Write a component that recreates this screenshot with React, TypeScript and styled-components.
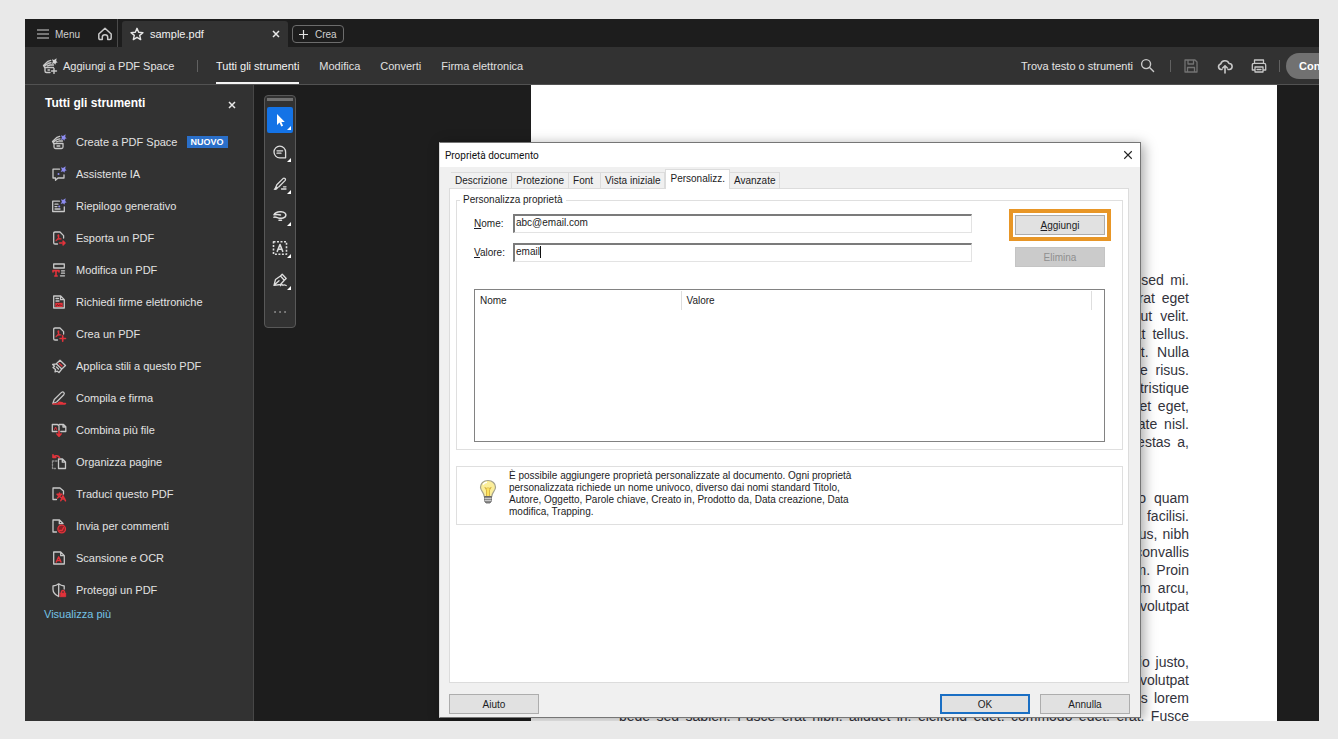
import React from "react";
import styled, { createGlobalStyle, css } from "styled-components";

const GlobalStyle = createGlobalStyle`
  *, *::before, *::after { box-sizing: border-box; }
  body {
    margin: 0;
    background: #e9e9e9;
    font-family: "Liberation Sans", Arial, sans-serif;
    font-size: 11px;
    color: #e4e4e4;
  }
  button, input { font: inherit; color: inherit; margin: 0; }
  button { background: none; border: 0; padding: 0; cursor: pointer; }
  a { color: inherit; text-decoration: none; }
  svg { display: block; flex: none; }
`;

/* ---------- window frame ---------- */

const Screen = styled.div`
  height: 100vh;
  min-width: 1160px;
  padding: 19px 19px 18px 25px;
`;

const Window = styled.div`
  position: relative;
  display: flex;
  flex-direction: column;
  height: 100%;
  overflow: hidden;
  background: #1d1d1d;
`;

const TitleBar = styled.header`
  display: flex;
  align-items: stretch;
  height: 28px;
  flex: none;
`;

const MenuButton = styled.button`
  display: flex;
  align-items: center;
  gap: 6px;
  width: 71px;
  padding-left: 12px;
  padding-top: 2px;
  font-size: 10px;
  color: #cfcfcf;
`;

const HomeButton = styled.button`
  display: flex;
  align-items: center;
  width: 22px;
  padding: 2px 0 0 1px;
  border-right: 1px solid #4a4a4a;
`;

const FileTab = styled.div`
  display: flex;
  align-items: center;
  gap: 6px;
  width: 166px;
  margin: 2px 4px 0;
  padding: 0 8px;
  background: #323232;
  border-radius: 3px 3px 0 0;
`;

const FileName = styled.span`
  flex: 1;
  color: #f0f0f0;
`;

const CreateButton = styled.button`
  display: flex;
  align-items: center;
  align-self: center;
  gap: 7px;
  height: 18px;
  margin-top: 2px;
  padding: 0 6px;
  border: 1px solid #6c6c6c;
  border-radius: 4px;
  font-size: 10px;
  color: #d0d0d0;
`;

const ToolBar = styled.nav`
  display: flex;
  align-items: stretch;
  height: 38px;
  flex: none;
  background: #323232;
  border-bottom: 1px solid #525252;
`;

const SpaceGroup = styled.div`
  display: flex;
  align-items: center;
  justify-content: space-between;
  width: 191px;
  padding: 0 18px 0 17px;
`;

const SpaceButton = styled.button`
  display: flex;
  align-items: center;
  gap: 5px;
`;

const NavLink = styled.a<{ $active?: boolean }>`
  display: flex;
  align-items: center;
  margin-right: 20px;
  border-bottom: 2px solid ${(p) => (p.$active ? "#f4f4f4" : "transparent")};
  padding-top: 2px;
  color: ${(p) => (p.$active ? "#f4f4f4" : "#e0e0e0")};
`;

const Divider = styled.span`
  align-self: center;
  width: 1px;
  height: 12px;
  background: #616161;
`;

const RightTools = styled.div`
  display: flex;
  align-items: center;
  margin-left: auto;
`;

const SearchButton = styled.button`
  display: flex;
  align-items: center;
  gap: 7px;
  margin-right: 15px;
`;

const IconRow = styled.div`
  display: flex;
  gap: 18px;
  padding: 0 12px;
`;

const ShareClip = styled.div`
  width: 33px;
  margin-left: 6px;
  overflow: hidden;
`;

const ShareButton = styled.button`
  height: 26px;
  padding: 0 13px;
  border-radius: 13px;
  background: #717171;
  color: #fff;
  font-weight: bold;
`;

/* ---------- sidebar ---------- */

const Body = styled.div`
  display: flex;
  align-items: stretch;
  flex: 1;
  min-height: 0;
`;

const Sidebar = styled.aside`
  width: 229px;
  flex: none;
  padding-top: 9px;
  background: #323232;
  border-right: 1px solid #474747;
`;

const SidebarHead = styled.div`
  display: flex;
  align-items: center;
  justify-content: space-between;
  height: 18px;
  padding: 0 17px 0 20px;
  margin-bottom: 14px;
`;

const SidebarTitle = styled.h2`
  margin: 0;
  font-size: 12px;
  color: #fff;
`;

const CloseButton = styled.button`
  margin-top: 4px;
`;

const ToolList = styled.ul`
  margin: 0;
  padding: 0;
  list-style: none;
`;

const ToolLink = styled.a`
  display: flex;
  align-items: center;
  gap: 9px;
  height: 32px;
  padding-left: 26px;
  color: #e2e2e2;
`;

const NewBadge = styled.span`
  padding: 0 4px;
  line-height: 12px;
  background: #2a6fc9;
  color: #fff;
  font-size: 9px;
  font-weight: bold;
`;

const MoreLink = styled.a`
  display: block;
  padding-left: 19px;
  line-height: 16px;
  color: #74c2e6;
`;

/* ---------- canvas ---------- */

const Toolbox = styled.div`
  display: flex;
  flex-direction: column;
  align-items: center;
  align-self: flex-start;
  gap: 6px;
  width: 32px;
  height: 233px;
  flex: none;
  margin: 10px 235px 0 10px;
  padding-top: 2px;
  border: 1px solid #585858;
  border-radius: 4px;
  background: #323232;
`;

const Grip = styled.div`
  width: 26px;
  height: 3px;
  background: #717171;
`;

const ToolboxButton = styled.button<{ $active?: boolean }>`
  display: flex;
  align-items: center;
  justify-content: center;
  position: relative;
  width: 26px;
  height: 26px;
  flex: none;
  border-radius: 2px;
  background: ${(p) => (p.$active ? "#1473e6" : "transparent")};
`;

const Corner = styled.svg`
  position: absolute;
  right: 2px;
  bottom: 3px;
`;

const Page = styled.main`
  flex: 1;
  min-width: 0;
  margin-right: 42px;
  padding: 186px 88px 0;
  overflow: hidden;
  background: #fff;
  color: #33333c;
  font-size: 14px;
  line-height: 18px;
`;

const Paragraph = styled.p`
  margin: 0 0 38px;
`;

const Line = styled.span`
  display: block;
  white-space: nowrap;
  text-align: justify;
  text-align-last: justify;
`;

/* ---------- dialog ---------- */

const Dialog = styled.section`
  position: absolute;
  top: 123px;
  left: 414px;
  width: 702px;
  display: flex;
  flex-direction: column;
  border: 1px solid #767676;
  border-left-color: #dcdcdc;
  background: #f0f0f0;
  box-shadow: 3px 2px 12px rgba(0, 0, 0, 0.35);
  color: #1c1c24;
  font-size: 10px;
`;

const DialogHead = styled.div`
  display: flex;
  align-items: center;
  justify-content: space-between;
  height: 24px;
  padding: 0 7px 0 5px;
  background: #fff;
`;

const DialogTitle = styled.h1`
  margin: 0;
  font: 400 10px Roboto, sans-serif;
  color: #111;
`;

const TabStrip = styled.div`
  display: flex;
  align-items: flex-end;
  height: 21px;
  padding-left: 11px;
`;

const Tab = styled.button<{ $active?: boolean; $wide?: boolean }>`
  position: relative;
  height: ${(p) => (p.$active ? 20 : 16)}px;
  margin-bottom: ${(p) => (p.$active ? -1 : 0)}px;
  padding: 0 4px ${(p) => (p.$active ? 3 : 0)}px;
  border: 1px solid #dcdcdc;
  border-bottom: 0;
  border-left-width: ${(p) => (p.$active ? 1 : 0)}px;
  background: ${(p) => (p.$active ? "#fff" : "#f0f0f0")};
  ${(p) =>
    p.$wide &&
    css`
      padding-right: 7px;
    `}
`;

const Pane = styled.div`
  height: 495px;
  margin: 0 11px 0 9px;
  padding: 5px 5px 0 6px;
  border: 1px solid #dcdcdc;
  background: #fff;
`;

const Group = styled.fieldset`
  margin: 0;
  padding: 0 17px 7px;
  border: 1px solid #dfdfdf;
`;

const Legend = styled.legend`
  margin-left: -14px;
  padding: 0 3px;
  line-height: 12px;
`;

const FormArea = styled.div`
  display: flex;
  justify-content: space-between;
  height: 83px;
`;

const Fields = styled.div`
  display: flex;
  flex-direction: column;
  gap: 10px;
  padding-top: 8px;
`;

const Field = styled.div`
  position: relative;
  display: flex;
  align-items: center;
  height: 19px;
`;

const Label = styled.label`
  width: 39px;
`;

const TextInput = styled.input`
  width: 459px;
  height: 19px;
  padding: 0 0 3px 1px;
  border: 1px solid #e3e3e3;
  border-top: 2px solid #7b7b7b;
  border-left: 2px solid #7b7b7b;
  background: #fff;
  outline: 0;
`;

const Caret = styled.span`
  position: absolute;
  top: 3px;
  left: 66px;
  width: 1px;
  height: 12px;
  background: #111;
`;

const Actions = styled.div`
  display: flex;
  flex-direction: column;
  align-items: center;
  gap: 6px;
  margin-right: -6px;
  padding-top: 3px;
`;

const Highlight = styled.div`
  padding: 2px;
  border: 4px solid #e89626;
`;

const PushButton = styled.button<{ $primary?: boolean }>`
  width: 90px;
  height: 20px;
  border: ${(p) => (p.$primary ? "2px solid #1a6fc4" : "1px solid #adadad")};
  background: #e1e1e1;
  &:disabled {
    border-color: #c4c4c4;
    background: #cbcbcb;
    color: #8f8f8f;
  }
`;

const ListBox = styled.div`
  height: 153px;
  border: 1px solid #828282;
  padding: 1px 12px 0 0;
`;

const PropertyTable = styled.table`
  width: 100%;
  table-layout: fixed;
  border-collapse: collapse;
  th {
    height: 19px;
    padding: 0 5px;
    border-right: 1px solid #dedede;
    text-align: left;
    font-weight: 400;
  }
  th:first-child { width: 206px; }
`;

const InfoBox = styled.div`
  display: flex;
  align-items: flex-start;
  height: 59px;
  margin-top: 16px;
  padding: 3px 0 0 22px;
  border: 1px solid #dfdfdf;
`;

const InfoText = styled.p`
  width: 345px;
  margin: 0 0 0 12px;
  line-height: 12px;
`;

const BulbWrap = styled.div`
  padding-top: 9px;
`;

const DialogFoot = styled.div`
  display: flex;
  gap: 10px;
  padding: 11px 10px 3px 9px;
`;

const Spacer = styled.span`
  flex: 1;
`;

/* ---------- icons ---------- */

const G = "#c8c8c8";
const R = "#e2333b";
const V = "#8d8cf0";

type IconProps = { children: React.ReactNode; size?: number; color?: string; width?: number };

const Icon = ({ children, size = 16, color = G, width = 1.3 }: IconProps) => (
  <svg
    width={size}
    height={size}
    viewBox="0 0 16 16"
    fill="none"
    stroke={color}
    strokeWidth={width}
    strokeLinecap="round"
    strokeLinejoin="round"
    aria-hidden="true"
  >
    {children}
  </svg>
);

const Spark = ({ color = V }) => (
  <path
    d="M10 1.300 12 2.100 14.600.3 14.200 2.900 15.700 4.600 14 4.700 13.300 6.700 12.100 5.200 9.700 5.900 10.900 3.700z"
    fill={color}
    stroke="none"
  />
);

const Acro = () => (
  <path
    d="M5 10.700c1.900-1.200 2.900-3.400 2.800-5.200 0-.8-1-.8-.9 0 .2 1.800 1.500 3.300 3.300 3.500M5 10.700c.6-1 2.800-1.800 4.700-1.700"
    stroke={R}
    strokeWidth="1.100"
  />
);

const Cross = ({ color = "#e8e8e8", size = 8, width = 1.5 }) => (
  <svg width={size} height={size} viewBox="0 0 8 8" stroke={color} strokeWidth={width} aria-hidden="true">
    <path d="M1 1l6 6M7 1 1 7" />
  </svg>
);

const docOutline = "M6.500 14H4q-1.300 0-1.300-1.300V3.300Q2.700 2 4 2h5l3.600 3.600V8";

const tools: { label: string; isNew?: boolean; icon: React.ReactNode }[] = [
  {
    label: "Create a PDF Space",
    isNew: true,
    icon: (
      <>
        <path d="M3 9.500V13q0 1.500 1.500 1.500h6q1.500 0 1.500-1.500V9.500zM6 12h2.800" />
        <path d="M2.600 9.300 1.500 7.500 6 3.300 8.700 2.400M3 7.800 6.500 5.300 9 4.800M5.500 7.800 8 7h3.500" />
        <Spark />
      </>
    ),
  },
  {
    label: "Assistente IA",
    icon: (
      <>
        <path d="M8.500 3.200H2V12h2.500v2.300L7 12h6V8.800" />
        <circle cx="7.500" cy="8" r="1" fill={V} stroke="none" />
        <Spark />
      </>
    ),
  },
  {
    label: "Riepilogo generativo",
    icon: (
      <>
        <path d="M8.500 3.200H1.700v10.300h11.600V8.800M4 6.200h3M4 8.600h2M4 11h5" />
        <circle cx="8.200" cy="8.600" r="1" fill={V} stroke="none" />
        <Spark />
      </>
    ),
  },
  {
    label: "Esporta un PDF",
    icon: (
      <>
        <path d={docOutline} />
        <Acro />
        <path d="M8.500 13h5M12 11.200 14 13l-2 1.800" stroke={R} strokeWidth="1.600" />
      </>
    ),
  },
  {
    label: "Modifica un PDF",
    icon: (
      <>
        <path d="M2.700 6V2h10.600v4zM10.500 8.800h3M10.500 11.200h3M9.500 13.800h4" />
        <path d="M2 10V8.600h6V10M5 8.800v5.200M3.800 14h2.400" stroke={R} strokeWidth="1.600" />
      </>
    ),
  },
  {
    label: "Richiedi firme elettroniche",
    icon: (
      <>
        <path d="M2.700 14V2h7l3.600 3.600V14zM9.500 2v3.700h3.800M5 4.500h2.500M5 7h3" />
        <path d="M4.300 8.800h7.400V13H4.300z" fill={R} stroke="none" />
        <path d="M5.500 12c.8-3 1.400-1 2 0 .8-2 1.400-.8 2.800-.6" stroke="#5a1416" strokeWidth=".8" />
      </>
    ),
  },
  {
    label: "Crea un PDF",
    icon: (
      <>
        <path d={docOutline} />
        <Acro />
        <path d="M9 12.500h5.500M11.700 9.800v5.400" stroke={R} strokeWidth="1.600" />
      </>
    ),
  },
  {
    label: "Applica stili a questo PDF",
    icon: (
      <>
        <path d="M5.300 5.800 9 2.300 14.500 7.500 10.800 11zM5.300 5.800 1.600 6.500 3.600 8.300 2 9.500 4.500 11.500 4 13.800 6.300 13.200 8 14.500 10.800 11M5.500 9l2 2" />
        <path d="M8.300 5.500 11 8" stroke={R} strokeWidth="1.400" />
      </>
    ),
  },
  {
    label: "Compila e firma",
    icon: (
      <>
        <path d="M1.800 13.500 3.300 9.500 10.500 2.400q1.300-1 2.300 0t0 2.300L5.600 12z" />
        <path d="M7 13.800c1.200-2 2.300-2 2.800-.6.800-.8 1.600-.8 2 .2h2.700M2 14h12" stroke={R} strokeWidth="1.500" />
      </>
    ),
  },
  {
    label: "Combina più file",
    icon: (
      <>
        <path d="M6 9.500H1.300V2.500H6.500L8 4v5M9.800 9.500h5V4.800l-2.300-2.300H8.200M12 2.600V5h2.600" />
        <path d="M3.500 7.500 4.600 5l1 2.500" stroke={R} strokeWidth="1" />
        <path d="M8 9v4.500M6 12l2 2.200 2-2.200" stroke={R} strokeWidth="1.700" />
      </>
    ),
  },
  {
    label: "Organizza pagine",
    icon: (
      <>
        <path d="M7.500 5h4l3 3v6.500h-7zM11.300 5v3.200h3.200" />
        <path d="M1.500 7v7.500H6M1.500 7H6" stroke="#8d8d8d" strokeDasharray="1.500 1.500" />
        <path d="M8.500 3.500C7 1.500 4.500 1.200 2.500 2.800M2 .8v2.700h2.800" stroke={R} strokeWidth="1.600" />
      </>
    ),
  },
  {
    label: "Traduci questo PDF",
    icon: (
      <>
        <path d="M5.500 13.500H2V2h7l3.500 3v3" />
        <path
          d="M6 8.200h5M8.500 7v1.200M10.300 8.400 6.500 12M7 9.500l3 2M9.800 14.800l2.200-5 2.500 5M10.800 13h3"
          stroke={R}
          strokeWidth="1.500"
        />
      </>
    ),
  },
  {
    label: "Invia per commenti",
    icon: (
      <>
        <path d="M5.500 14H2V2h6.500L12 5.500M8.300 2v3.700H12" />
        <circle cx="10.700" cy="11" r="3.800" fill="#8c2227" stroke={R} />
        <path d="M8.600 12.500h2.500l1.500-3" stroke={R} />
      </>
    ),
  },
  {
    label: "Scansione e OCR",
    icon: (
      <>
        <path d="M2.700 14V2h7l3.600 3.600V14zM9.700 2v3.700h3.500" />
        <path d="M5.300 12 7.700 6.800 10 12M6 10.500h3.300" stroke={R} strokeWidth="1.400" />
      </>
    ),
  },
  {
    label: "Proteggi un PDF",
    icon: (
      <>
        <path d="M7.700 14.500C3.500 12.500 2 10.500 2 7.500V4q3.500-.3 5.700-2.200Q10 3.700 13.200 4v3M7.700 2v12.500" />
        <path d="M9.300 11h5.400v3.700H9.300z" fill={R} stroke={R} strokeWidth=".8" />
        <path d="M10.500 11V9.500q1.500-2 3 0V11" stroke={R} />
      </>
    ),
  },
];

const toolboxTools: { label: string; icon: React.ReactNode }[] = [
  {
    label: "Seleziona",
    icon: <path d="M5 2v11l2.500-2.400L9.300 14.500l1.800-.8L9.400 10h3.400z" fill="#fff" stroke="none" />,
  },
  {
    label: "Commento",
    icon: <path d="M7.800 2.200a5.800 5.800 0 0 0 0 11.600h5.800V8a5.800 5.800 0 0 0-5.800-5.800zM5 6.800h5.600M5 9.200h4" />,
  },
  {
    label: "Evidenzia",
    icon: (
      <>
        <path d="M4 11 4.800 8.800 11 2.600q1-.8 2 0t0 2L6.700 11 4 12zM9.500 13h4.500M11.500 10.800h2.500" />
        <path d="M1.500 13.800 3.700 10.500 6 12.500l-2 1.500z" fill="#dedede" stroke="none" />
      </>
    ),
  },
  {
    label: "Disegna",
    icon: (
      <path
        d="M2 6.800C3 4.500 6 3.500 9 3.700c3.500.2 5.300 2 4.800 4C13.200 10 9.500 10.800 6.500 10 4.800 9.500 3.600 8.800 2 9.200M2 6.800q4-.9 6.500.2M7 12.300h2.500"
        strokeWidth="1.500"
      />
    ),
  },
  {
    label: "Testo",
    icon: (
      <>
        <path d="M1.500 1.800h13v12.400h-13z" strokeDasharray="2 1.500" strokeLinecap="butt" strokeWidth="1.600" />
        <path d="M5.300 11.300 8 4.500l2.700 6.800M6.200 9.300h3.600" strokeWidth="1.600" />
      </>
    ),
  },
  {
    label: "Firma",
    icon: (
      <>
        <path d="M2 13.300 3.500 7.500 8.500 4l3.800 4.200L8.500 12.500zM2 13.300 7 8.800M8.500 4l1.700-1.800 4 4.300-1.900 1.700" />
        <path d="M8.500 13.700c1-1.500 2-1.200 2.500-.4.800-.6 1.700-.5 3.200.2" />
      </>
    ),
  },
];

const navItems = ["Tutti gli strumenti", "Modifica", "Converti", "Firma elettronica"];
const tabs = ["Descrizione", "Protezione", "Font", "Vista iniziale", "Personalizz.", "Avanzate"];

const paragraphs = [
  [
    "Lorem ipsum dolor sit amet, consectetuer adipiscing elit. Maecenas luctus ante sed mi.",
    "Integer ut felis vitae ligula tempor porta. Vivamus mollis nunc ac sapien, sed erat eget",
    "lorem dapibus pretium. Aenean lacinia, neque vel posuere rutrum, sem risus ut velit.",
    "Donec porttitor mauris id magna. Quisque in arcu non metus vehicula blandit at tellus.",
    "Morbi faucibus, justo vitae ornare congue, dolor enim semper nibh, quam elit. Nulla",
    "tempus pulvinar massa. Etiam viverra ipsum ac felis lobortis, amet dictum ante risus.",
    "Suspendisse potenti. Praesent iaculis magna id urna. Pellentesque habitant morbi tristique",
    "senectus et netus et malesuada fames ac turpis egestas. Curabitur odio sit amet eget,",
    "porta quis, euismod nec, sapien. Phasellus bibendum leo in purus, vitae vulputate nisl.",
    "Sed commodo tellus id tortor. Cras ultrices lectus, feugiat ac, et rutrum vel, egestas a,",
  ],
  [
    "Pellentesque sit amet lectus. Praesent pulvinar, nunc quis iaculis sagittis, justo quam",
    "lobortis tortor, sed vestibulum dui metus venenatis est. Nunc cursus ligula. Nulla facilisi.",
    "Phasellus ullamcorper consectetuer ante. Duis tincidunt, urna id condimentum luctus, nibh",
    "ante vulputate sapien, id sagittis massa orci ut enim. Pellentesque vestibulum convallis",
    "sem. Nulla consequat quam ut nisl. Nullam est. Curabitur tincidunt dapibus lorem. Proin",
    "velit turpis, scelerisque sit amet, iaculis nec, rhoncus ac, ipsum. Phasellus lorem arcu,",
    "feugiat eu, gravida eu, consequat molestie, ipsum. Nullam vel est ut ipsum volutpat",
  ],
  [
    "In mauris. Pellentesque dui nisi, iaculis eu, rhoncus in, venenatis ac, ante. Ut odio justo,",
    "scelerisque vel, facilisis non, commodo a, pede. Cras nec massa sit amet tortor volutpat",
    "varius. Donec lacinia, neque a luctus aliquet, pede massa imperdiet quam, varius lorem",
    "pede sed sapien. Fusce erat nibh, aliquet in, eleifend eget, commodo eget, erat. Fusce",
  ],
];

export default function App() {
  return (
    <Screen>
      <GlobalStyle />
      <Window>
        <TitleBar>
          <MenuButton>
            <svg width="12" height="10" viewBox="0 0 12 10" stroke="#d0d0d0" strokeWidth="1.200" aria-hidden="true">
              <path d="M0 1h12M0 5h12M0 9h12" />
            </svg>
            Menu
          </MenuButton>
          <HomeButton aria-label="Home">
            <Icon width={1.5}>
              <path d="M1.800 8 8 2.200 14.200 8V12q0 1.500-1.500 1.500h-2V11q0-2.300-2.700-2.300T5.300 11v2.500h-2Q1.800 13.500 1.800 12z" />
            </Icon>
          </HomeButton>
          <FileTab>
            <Icon size={14} color="#e6e6e6" width={1.6}>
              <path d="M8 1.500 9.900 6l4.900.4-3.700 3.200 1.100 4.800L8 11.800l-4.200 2.600 1.100-4.800L1.200 6.400 6.100 6z" />
            </Icon>
            <FileName>sample.pdf</FileName>
            <button aria-label="Chiudi scheda">
              <Cross />
            </button>
          </FileTab>
          <CreateButton>
            <svg width="9" height="9" viewBox="0 0 9 9" stroke="#e0e0e0" strokeWidth="1.200" aria-hidden="true">
              <path d="M4.500 0v9M0 4.500h9" />
            </svg>
            Crea
          </CreateButton>
        </TitleBar>

        <ToolBar>
          <SpaceGroup>
            <SpaceButton>
              <Icon width={1.400}>
                <path d="M8 14.500H4.500Q3 14.500 3 13V9.500h8.500M6 12h1.500M9.500 13h5M12 10.500v5" />
                <path d="M2.600 9.300 1.500 7.500 6 3.300 8.700 2.400M3 7.800 6.500 5.300 9 4.800M5.500 7.800 8 7h3.500" />
                <Spark color="#d8d8d8" />
              </Icon>
              Aggiungi a PDF Space
            </SpaceButton>
            <Divider />
          </SpaceGroup>
          {navItems.map((item, i) => (
            <NavLink key={item} href="#" $active={i === 0}>
              {item}
            </NavLink>
          ))}
          <RightTools>
            <SearchButton>
              Trova testo o strumenti
              <Icon size={15} width={1.500}>
                <circle cx="6.500" cy="6.500" r="4.800" />
                <path d="M10.200 10.200 14.500 14.500" />
              </Icon>
            </SearchButton>
            <Divider />
            <IconRow>
              <button aria-label="Salva" disabled>
                <Icon color="#737373">
                  <path d="M2 2h10l2 2v10H2zM5 2v4h5.500V2M4.500 14V9.500h7V14" />
                </Icon>
              </button>
              <button aria-label="Carica nel cloud">
                <Icon width={1.600}>
                  <path d="M5 11.500H4a2.800 2.800 0 0 1-.3-5.500A4.400 4.400 0 0 1 12 5.500a3 3 0 0 1 .2 6H11M8 15V8M5.700 10 8 7.700l2.300 2.300" />
                </Icon>
              </button>
              <button aria-label="Stampa">
                <Icon>
                  <path d="M3.500 5V2h9v3M3.500 12H1.300V7q0-1.700 1.700-1.700h10q1.700 0 1.700 1.700v5h-2.200M4 9h8v5H4zM6 11.500h4" />
                </Icon>
              </button>
            </IconRow>
            <Divider />
            <ShareClip>
              <ShareButton>Condividi</ShareButton>
            </ShareClip>
          </RightTools>
        </ToolBar>

        <Body>
          <Sidebar>
            <SidebarHead>
              <SidebarTitle>Tutti gli strumenti</SidebarTitle>
              <CloseButton aria-label="Chiudi pannello">
                <Cross />
              </CloseButton>
            </SidebarHead>
            <ToolList>
              {tools.map((tool) => (
                <li key={tool.label}>
                  <ToolLink href="#">
                    <Icon>{tool.icon}</Icon>
                    {tool.label}
                    {tool.isNew && <NewBadge>NUOVO</NewBadge>}
                  </ToolLink>
                </li>
              ))}
            </ToolList>
            <MoreLink href="#">Visualizza più</MoreLink>
          </Sidebar>

          <Toolbox>
            <Grip />
            {toolboxTools.map((tool, i) => (
              <ToolboxButton key={tool.label} aria-label={tool.label} $active={i === 0}>
                <Icon color="#dedede">{tool.icon}</Icon>
                <Corner width="4" height="4" viewBox="0 0 4 4" fill="#fff" aria-hidden="true">
                  <path d="M4 0v4H0z" />
                </Corner>
              </ToolboxButton>
            ))}
            <ToolboxButton aria-label="Altri strumenti">
              <Icon>
                <path d="M3 8h.1M8 8h.1M13 8h.1" strokeWidth="1.500" />
              </Icon>
            </ToolboxButton>
          </Toolbox>

          <Page>
            {paragraphs.map((lines) => (
              <Paragraph key={lines[0]}>
                {lines.map((line) => (
                  <Line key={line}>{line}</Line>
                ))}
              </Paragraph>
            ))}
          </Page>
        </Body>

        <Dialog role="dialog" aria-label="Proprietà documento">
          <DialogHead>
            <DialogTitle>Proprietà documento</DialogTitle>
            <button aria-label="Chiudi">
              <Cross color="#222" size={10} width={0.9} />
            </button>
          </DialogHead>
          <TabStrip role="tablist">
            {tabs.map((tab) => (
              <Tab
                key={tab}
                role="tab"
                aria-selected={tab === "Personalizz."}
                $active={tab === "Personalizz."}
                $wide={tab === "Font"}
              >
                {tab}
              </Tab>
            ))}
          </TabStrip>
          <Pane>
            <Group>
              <Legend>Personalizza proprietà</Legend>
              <FormArea>
                <Fields>
                  <Field>
                    <Label htmlFor="prop-name">
                      <u>N</u>ome:
                    </Label>
                    <TextInput id="prop-name" defaultValue="abc@email.com" />
                  </Field>
                  <Field>
                    <Label htmlFor="prop-value">
                      <u>V</u>alore:
                    </Label>
                    <TextInput id="prop-value" defaultValue="email" />
                    <Caret />
                  </Field>
                </Fields>
                <Actions>
                  <Highlight>
                    <PushButton>
                      <u>A</u>ggiungi
                    </PushButton>
                  </Highlight>
                  <PushButton disabled>Elimina</PushButton>
                </Actions>
              </FormArea>
              <ListBox>
                <PropertyTable>
                  <thead>
                    <tr>
                      <th>Nome</th>
                      <th>Valore</th>
                    </tr>
                  </thead>
                </PropertyTable>
              </ListBox>
            </Group>
            <InfoBox>
              <BulbWrap>
                <svg width="18" height="26" viewBox="0 0 18 26" aria-hidden="true">
                  <path
                    d="M9 1.500c-4.500 0-7.500 3-7.500 6.700 0 3.800 3.500 5 3.800 9.300h7.400c.3-4.300 3.800-5.500 3.800-9.300 0-3.700-3-6.700-7.500-6.700z"
                    fill="#fbee9a"
                    stroke="#a3a18e"
                    strokeWidth="1.200"
                  />
                  <path d="M7.500 17V11L5.800 8.500 8 9.500l1-1 1 1 2.200-1L10.500 11v6" fill="#fde35c" stroke="#d9b546" />
                  <path d="M4 5.500C5 4 6.500 3.300 8 3.300" stroke="#fff" strokeWidth="1.500" fill="none" />
                  <path d="M5.500 17.500h7V22L11 24H7l-1.500-2z" fill="#8b8b8b" stroke="#5e5e5e" strokeWidth=".8" />
                  <path d="M5.500 19.500h7M5.500 21.500h7" stroke="#d8d8d8" strokeWidth=".8" />
                </svg>
              </BulbWrap>
              <InfoText>
                È possibile aggiungere proprietà personalizzate al documento. Ogni proprietà personalizzata richiede un
                nome univoco, diverso dai nomi standard Titolo, Autore, Oggetto, Parole chiave, Creato in, Prodotto da,
                Data creazione, Data modifica, Trapping.
              </InfoText>
            </InfoBox>
          </Pane>
          <DialogFoot>
            <PushButton>Aiuto</PushButton>
            <Spacer />
            <PushButton $primary>OK</PushButton>
            <PushButton>Annulla</PushButton>
          </DialogFoot>
        </Dialog>
      </Window>
    </Screen>
  );
}
